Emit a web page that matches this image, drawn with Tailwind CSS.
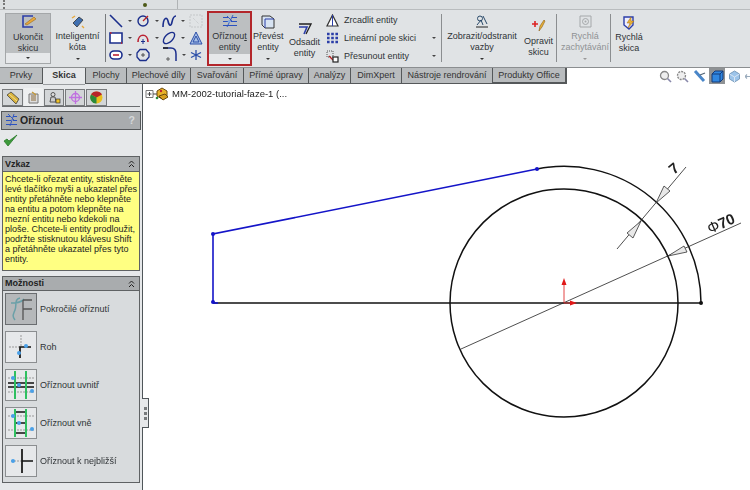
<!DOCTYPE html>
<html lang="cs">
<head>
  <meta charset="UTF-8" />
  <title>Oříznout entity</title>
  <script src="https://cdn.jsdelivr.net/npm/@tailwindcss/browser@4"></script>
</head>
<body class="w-[750px] h-[490px] overflow-hidden bg-white blur-[0.3px] text-[#2f3336] font-['Liberation_Sans',Arial,sans-serif] text-[9px] leading-[10.5px]">

  <!-- horni lista -->
  <div class="h-[10px] bg-[#dcdfe1] border-b border-[#b9bcbe] flex items-center pl-[3px] gap-[20px]">
    <div class="w-[2px] h-[9px] border-l-2 border-dotted border-[#777]"></div>
    <div class="w-[4px] h-[4px] ml-[118px] bg-[#4d5a18] rounded-full"></div>
    <div class="w-px h-[9px] ml-[10px] bg-[#b0b3b5]"></div>
  </div>

  <!-- ribbon -->
  <div class="h-[58px] bg-[#e0e3e5] border-b border-[#8b8e90] flex pl-[5px] pt-[3px]">
    <div class="w-[46px] h-[51px] flex flex-col bg-[#bcbfc1] border border-[#a4a7a9] text-center">
      <svg class="mx-auto mt-px" width="20" height="15" viewBox="0 0 20 15"><path d="M15 1H5v11h10" fill="none" stroke="#2b3ea8" stroke-width="1.6"/><path d="M7 9l9-7 2 2-9 6z" fill="#e8a83a" stroke="#8a5a10" stroke-width=".5"/></svg>
      <div class="mt-[2px] h-[21px]">Ukončit<br>skicu</div>
      <div class="mt-auto h-[10px] bg-[#e6e8ea] flex items-center justify-center"><i class="w-0 h-0 border-x-[2px] border-t-[2px] border-x-transparent border-t-[#333]"></i></div>
    </div>
    <div class="w-[47px] h-[51px] ml-[3px] flex flex-col text-center">
      <svg class="mx-auto mt-[2px]" width="16" height="14" viewBox="0 0 16 14"><path d="M3 8l6-6 4 3-6 7z" fill="#3f6fb0" stroke="#333" stroke-width=".8"/><path d="M2 3l3-2M12 11l2 2" stroke="#e8a83a" stroke-width="1.4"/></svg>
      <div class="mt-[2px] h-[21px] whitespace-nowrap">Inteligentní<br>kóta</div>
      <div class="mt-auto h-[10px] flex items-center justify-center"><i class="w-0 h-0 border-x-[2px] border-t-[2px] border-x-transparent border-t-[#333]"></i></div>
    </div>
    <div class="w-px h-[48px] ml-[4px] mt-px bg-[#777a7c]"></div>

    <!-- mrizka nastroju skici -->
    <div class="w-[100px] h-[51px] -mt-[1px] grid grid-cols-[26px_27px_27px_20px] auto-rows-[17px]">
      <div class="flex items-center pl-[3px] gap-[5px]"><svg width="14" height="14" viewBox="0 0 14 14"><path d="M1 1l12 12" stroke="#1a2e8c" stroke-width="1.6"/></svg><i class="w-0 h-0 border-x-[2px] border-t-[2px] border-x-transparent border-t-[#444]"></i></div>
      <div class="flex items-center pl-[4px] gap-[5px]"><svg width="14" height="14" viewBox="0 0 14 14"><circle cx="7" cy="7" r="5" fill="none" stroke="#1a2e8c" stroke-width="1.4"/><path d="M7 7l5-5" stroke="#b22" stroke-width="1.2"/></svg><i class="w-0 h-0 border-x-[2px] border-t-[2px] border-x-transparent border-t-[#444]"></i></div>
      <div class="flex items-center pl-[3px] gap-[4px]"><svg width="15" height="14" viewBox="0 0 15 14"><path d="M1 13C1 4 5 2 6 7s3 6 4 1 2-6 4-6" fill="none" stroke="#1a2e8c" stroke-width="1.6"/></svg><i class="w-0 h-0 border-x-[2px] border-t-[2px] border-x-transparent border-t-[#444]"></i></div>
      <div class="flex items-center pl-[3px]"><svg width="14" height="14" viewBox="0 0 14 14"><path d="M1 1h12v12H1z" fill="none" stroke="#c4c7c9" stroke-dasharray="2 1"/><path d="M4 4l6 6" stroke="#c4c7c9" stroke-dasharray="1 1"/></svg></div>

      <div class="flex items-center pl-[3px] gap-[5px]"><svg width="14" height="14" viewBox="0 0 14 14"><path d="M1 2h12v10H1z" fill="#fff" stroke="#1a2e8c" stroke-width="1.6"/><path d="M1 2h1.500M13 12h-1" stroke="#c22" stroke-width="1.600"/></svg><i class="w-0 h-0 border-x-[2px] border-t-[2px] border-x-transparent border-t-[#444]"></i></div>
      <div class="flex items-center pl-[4px] gap-[5px]"><svg width="14" height="14" viewBox="0 0 14 14"><path d="M2 11C2 2 12 2 12 11" fill="none" stroke="#b23" stroke-width="1.600"/><path d="M7 8v5M5 10.500h4" stroke="#1a2e8c"/></svg><i class="w-0 h-0 border-x-[2px] border-t-[2px] border-x-transparent border-t-[#444]"></i></div>
      <div class="flex items-center pl-[3px] gap-[5px]"><svg width="14" height="14" viewBox="0 0 14 14"><ellipse cx="7" cy="7" rx="7" ry="3.800" transform="rotate(-45 7 7)" fill="none" stroke="#1a2e8c" stroke-width="1.400"/></svg><i class="w-0 h-0 border-x-[2px] border-t-[2px] border-x-transparent border-t-[#444]"></i></div>
      <div class="flex items-center pl-[3px]"><svg width="14" height="14" viewBox="0 0 14 14"><path d="M7 1l6 12H1zM7 5l3 6H4z" fill="#a8c0e6" stroke="#2b4ea8"/></svg></div>

      <div class="flex items-center pl-[3px] gap-[5px]"><svg width="14" height="14" viewBox="0 0 14 14"><rect x="1" y="3" width="12" height="8" rx="4" fill="#fff" stroke="#1a2e8c" stroke-width="1.600"/><path d="M4 7h6" stroke="#b23" stroke-width="1.600"/></svg><i class="w-0 h-0 border-x-[2px] border-t-[2px] border-x-transparent border-t-[#444]"></i></div>
      <div class="flex items-center pl-[4px] gap-[5px]"><svg width="14" height="14" viewBox="0 0 14 14"><path d="M4 1.500h6L13 5v4l-3 3.500H4L1 9V5z" fill="none" stroke="#1a2e8c" stroke-width="1.300"/><path d="M7 5v4M5 7h4" stroke="#333" stroke-width=".8"/></svg></div>
      <div class="flex items-center pl-[3px] gap-[4px]"><svg width="16" height="15" viewBox="0 0 16 15"><path d="M1 1h8c4 0 5 3 5 6v7" fill="none" stroke="#1a2e8c" stroke-width="1.500"/><path d="M1 1h5" stroke="#222" stroke-width="1.500"/><path d="M6 10v4M4 12h4" stroke="#444" stroke-width=".8"/></svg><i class="w-0 h-0 border-x-[2px] border-t-[2px] border-x-transparent border-t-[#444]"></i></div>
      <div class="flex items-center pl-[4px]"><svg width="12" height="12" viewBox="0 0 12 12"><path d="M6 1v10M1 3.500l10 5M1 8.500l10-5" stroke="#2b4ea8" stroke-width="1.300"/></svg></div>
    </div>

    <!-- Oriznout entity -->
    <div class="w-[45px] h-[55px] -mt-[2px] ml-px flex flex-col border-2 border-[#b3262b] text-center bg-[#bcbfc1]">
      <svg class="mx-auto mt-[2px]" width="16" height="13" viewBox="0 0 16 13"><path d="M1 2.500h5M10 2.500h5M1 6.500h6M9 6.500h6M1 10.500h14" stroke="#2b52c0" stroke-width="1.200"/><path d="M5 1l6 6M11 0L5 12" stroke="#2b52c0" stroke-width=".9"/><circle cx="7" cy="6.500" r="1.200" fill="#7aa7e8"/></svg>
      <div class="mt-[3px] h-[21px] whitespace-nowrap">Oříznou<u>t</u><br>entity</div>
      <div class="mt-auto h-[10px] bg-[#e6e8ea] flex items-center justify-center"><i class="w-0 h-0 border-x-[2px] border-t-[2px] border-x-transparent border-t-[#333]"></i></div>
    </div>
    <div class="w-[30px] h-[51px] ml-[1px] flex flex-col text-center">
      <svg class="mx-auto mt-[2px]" width="14" height="14" viewBox="0 0 14 14"><path d="M1 1h8l4 3v9H4L1 10z" fill="#d7e3f2" stroke="#333"/><path d="M4 4h9M4 4v9" stroke="#2b3ea8"/></svg>
      <div class="mt-[2px] h-[21px]">Převést<br>entity</div>
      <div class="mt-auto h-[10px] flex items-center justify-center"><i class="w-0 h-0 border-x-[2px] border-t-[2px] border-x-transparent border-t-[#333]"></i></div>
    </div>
    <div class="w-[33px] h-[51px] ml-[5px] flex flex-col text-center">
      <svg class="mx-auto mt-[9px]" width="14" height="13" viewBox="0 0 14 13"><path d="M1 2h12l-5 10" fill="none" stroke="#222" stroke-width="1.300"/><path d="M1 5h8l-3 7" fill="none" stroke="#2b3ea8" stroke-width="1.600"/></svg>
      <div class="mt-[2px]">Odsadit<br>entity</div>
    </div>

    <!-- seznam -->
    <div class="w-[115px] ml-[5px] flex flex-col gap-[6px] pt-[1px] shrink-0">
      <div class="h-[12px] flex items-center gap-[5px]"><svg width="13" height="13" viewBox="0 0 13 13"><path d="M6.500 1L12 12H1z" fill="#fff" stroke="#333" stroke-width="1.200"/><path d="M6.500 1v11" stroke="#2b3ea8"/></svg>Zrcadlit entity</div>
      <div class="h-[12px] flex items-center gap-[5px]"><svg width="13" height="12" viewBox="0 0 13 12"><path d="M1 2h11M1 6h11M1 10h11" stroke="#2b3ea8" stroke-width="2.400" stroke-dasharray="2.600 1.600"/></svg>Lineární pole skici<i class="ml-auto mr-[5px] w-0 h-0 border-x-[2px] border-t-[2px] border-x-transparent border-t-[#444]"></i></div>
      <div class="h-[12px] flex items-center gap-[5px]"><svg width="13" height="13" viewBox="0 0 13 13"><path d="M1 1h6v6H1z" fill="none" stroke="#555" stroke-dasharray="1 1"/><path d="M3 6l4 4" stroke="#b22" stroke-width="1.300"/><rect x="7" y="7" width="5" height="5" fill="#fff" stroke="#222" stroke-width="1.200"/></svg>Přesunout entity<i class="ml-auto mr-[5px] w-0 h-0 border-x-[2px] border-t-[2px] border-x-transparent border-t-[#444]"></i></div>
    </div>
    <div class="w-px h-[48px] mt-px bg-[#8b8e90]"></div>

    <div class="w-[72px] h-[51px] ml-[4px] flex flex-col text-center">
      <svg class="mx-auto mt-[1px]" width="14" height="14" viewBox="0 0 14 14"><path d="M1 13h12" stroke="#222"/><path d="M5 2a2.500 2.500 0 100 5 2.500 2.500 0 000-5zM2 11l4-5 2 5M8 2l4 8" fill="none" stroke="#2a4a6a"/></svg>
      <div class="mt-[3px] h-[21px] whitespace-nowrap">Zobrazit/odstranit<br>vazby</div>
      <div class="mt-auto h-[10px] flex items-center justify-center"><i class="w-0 h-0 border-x-[2px] border-t-[2px] border-x-transparent border-t-[#333]"></i></div>
    </div>
    <div class="w-[33px] h-[51px] ml-[4px] flex flex-col text-center">
      <svg class="mx-auto mt-[6px]" width="15" height="14" viewBox="0 0 15 14"><path d="M1 5h6M4 2v6" stroke="#d22" stroke-width="1.600"/><path d="M8 12l1-5 4-6 1 1-3 6z" fill="#e8b23a" stroke="#8a5a10" stroke-width=".6"/></svg>
      <div class="mt-[3px]">Opravit<br>skicu</div>
    </div>
    <div class="w-px h-[48px] ml-[1px] mt-px bg-[#8b8e90]"></div>
    <div class="w-[48px] h-[51px] ml-[4px] flex flex-col text-center text-[#8f9294]">
      <svg class="mx-auto mt-[2px]" width="13" height="13" viewBox="0 0 13 13"><path d="M1 1h11v11H1z" fill="none" stroke="#a5a8aa"/><circle cx="6.500" cy="6.500" r="3" fill="none" stroke="#a5a8aa"/><circle cx="6.500" cy="6.500" r="1" fill="#a5a8aa"/></svg>
      <div class="mt-[3px] h-[21px] whitespace-nowrap">Rychlá<br>zachytávání</div>
      <div class="mt-auto h-[10px] flex items-center justify-center"><i class="w-0 h-0 border-x-[2px] border-t-[2px] border-x-transparent border-t-[#999]"></i></div>
    </div>
    <div class="w-px h-[48px] ml-[1px] mt-px bg-[#8b8e90]"></div>
    <div class="w-[30px] h-[51px] ml-[3px] flex flex-col text-center">
      <svg class="mx-auto mt-[3px]" width="14" height="14" viewBox="0 0 14 14"><path d="M2 1h9v8l-4 4-5-4z" fill="#eef" stroke="#2b3ea8" stroke-width="1.400"/><path d="M9 1L5 7h3l-2 5 6-7H9z" fill="#e8b23a" stroke="#a06a10" stroke-width=".5"/></svg>
      <div class="mt-[2px]">Rychlá<br>skica</div>
    </div>
  </div>

  <!-- zalozky -->
  <div class="h-[16px] flex items-stretch relative z-10 text-[#333]">
    <div class="w-[43px] bg-[#b9bcbe] border-r border-b border-[#55585a] text-center leading-[14px]">Prvky</div>
    <div class="w-[42px] h-[17px] bg-[#e6e8ea] border-b border-[#9a9da0] text-center font-bold leading-[14px]">Skica</div>
    <div class="w-[42px] bg-[#b9bcbe] border-x border-b border-[#55585a] text-center leading-[14px]">Plochy</div>
    <div class="w-[64px] bg-[#b9bcbe] border-r border-b border-[#55585a] text-center leading-[14px]">Plechové díly</div>
    <div class="w-[53px] bg-[#b9bcbe] border-r border-b border-[#55585a] text-center leading-[14px]">Svařování</div>
    <div class="w-[65px] bg-[#b9bcbe] border-r border-b border-[#55585a] text-center leading-[14px]">Přímé úpravy</div>
    <div class="w-[42px] bg-[#b9bcbe] border-r border-b border-[#55585a] text-center leading-[14px]">Analýzy</div>
    <div class="w-[51px] bg-[#b9bcbe] border-r border-b border-[#55585a] text-center leading-[14px]">DimXpert</div>
    <div class="w-[91px] bg-[#b9bcbe] border-r border-b border-[#55585a] text-center leading-[14px]">Nástroje rendrování</div>
    <div class="w-[74px] bg-[#b9bcbe] border-r-2 border-b-2 border-[#55585a] text-center leading-[14px]">Produkty Office</div>

    <!-- ikony pohledu -->
    <div class="ml-auto flex items-center gap-[4px] pr-0">
      <svg width="13" height="13" viewBox="0 0 13 13"><circle cx="5.500" cy="5.500" r="4" fill="#eee" stroke="#888" stroke-width="1.300"/><path d="M8.500 8.500l3.500 3.500" stroke="#88a" stroke-width="1.600"/></svg>
      <svg width="13" height="13" viewBox="0 0 13 13"><circle cx="5.500" cy="5.500" r="4" fill="#eee" stroke="#888" stroke-width="1.300" stroke-dasharray="2 1"/><path d="M8.500 8.500l3.500 3.500" stroke="#88a" stroke-width="1.600"/></svg>
      <svg width="13" height="13" viewBox="0 0 13 13"><path d="M2 1l9 10" stroke="#4a86c8" stroke-width="3"/><path d="M7 5l5-2" stroke="#567" stroke-width="1.200"/></svg>
      <div class="w-[16px] h-[16px] -mx-px bg-[#8f9294] flex items-center justify-center"><svg width="13" height="13" viewBox="0 0 13 13"><path d="M1 4l3-3h8v8l-3 3H1z" fill="#2f86e0" stroke="#123a7a"/><path d="M1 4h8v8M9 4l3-3" fill="none" stroke="#123a7a"/></svg></div>
      <svg width="13" height="13" viewBox="0 0 13 13"><path d="M6.500 1l5 3v5l-5 3-5-3V4z" fill="#9cc4ea" stroke="#7a9cbc"/><path d="M1.500 4l5 3 5-3M6.500 7v5" fill="none" stroke="#d7e6f5"/></svg>
      <svg width="5" height="13" viewBox="0 0 5 13"><path d="M0 6.500h5M2 4.500L0 6.500l2 2" fill="none" stroke="#9ab" stroke-width="1.200"/></svg>
    </div>
  </div>

  <div class="h-[406px] flex relative">
    <!-- levy panel -->
    <aside class="w-[143px] shrink-0 bg-[#e6e8ea] border-r border-[#50565a] flex flex-col px-[2px]">
      <div class="flex h-[23px] pt-[5px] gap-px pl-0 border-b border-[#6a6d70]">
        <div class="w-[21px] bg-[#d3d6d8] border border-[#777a7c] flex items-center justify-center"><svg width="14" height="14" viewBox="0 0 14 14"><path d="M1 4l4-3 8 7-3 5z" fill="#d8b23c" stroke="#444" stroke-width=".8"/><path d="M3 3l8 7" stroke="#f4e08a"/></svg></div>
        <div class="w-[19px] -mt-[1px] bg-[#eef0f1] flex items-center justify-center"><svg width="13" height="13" viewBox="0 0 13 13"><path d="M2 3h9v9H2z" fill="#ddd" stroke="#777"/><path d="M4 5h5M4 7h5M4 9h5" stroke="#8a6a3a"/><path d="M5 1l4 3" stroke="#c49a3a" stroke-width="1.500"/></svg></div>
        <div class="w-[20px] bg-[#d3d6d8] border border-[#777a7c] flex items-center justify-center"><svg width="13" height="13" viewBox="0 0 13 13"><circle cx="5" cy="3.500" r="2" fill="#ddd" stroke="#555"/><path d="M2 11l1-5h4l1 5z" fill="#ccc" stroke="#555"/><rect x="8" y="8" width="4" height="4" fill="#eec22a" stroke="#333" stroke-width=".7"/></svg></div>
        <div class="w-[20px] bg-[#d3d6d8] border border-[#777a7c] flex items-center justify-center"><svg width="13" height="13" viewBox="0 0 13 13"><circle cx="6.500" cy="6.500" r="4" fill="none" stroke="#c070e0" stroke-width="1.300"/><path d="M6.500 0v13M0 6.500h13" stroke="#c070e0" stroke-width="1.300"/></svg></div>
        <div class="w-[21px] bg-[#d3d6d8] border border-[#777a7c] flex items-center justify-center"><svg width="13" height="13" viewBox="0 0 13 13"><circle cx="6.500" cy="6.500" r="6" fill="#e8c020"/><path d="M6.500 6.500L1 3.500A6 6 0 016.500.5 6 6 0 0112 3.500z" fill="#b8242a"/><path d="M6.500 6.500V12.500A6 6 0 011 3.500z" fill="#2a8a3a"/></svg></div>
      </div>
      <div class="-mx-px mt-[4px] h-[19px] bg-[#a9acae] border border-[#55585a] flex items-center pl-[3px] font-bold text-[10.500px] text-[#222]">
        <svg class="mr-[2px]" width="13" height="13" viewBox="0 0 13 13"><path d="M1 2.500h4M8 2.500h4M1 6.500h5M8 6.500h4M1 10.500h11" stroke="#2b52c0" stroke-width="1.200"/><path d="M3 0l7 7M9 0L5 12" stroke="#2b52c0" stroke-width=".9"/></svg>Oříznout
        <span class="ml-auto mr-[5px] font-bold text-[#d6d8da]">?</span>
      </div>
      <svg class="ml-[1px] mt-[4px]" width="15" height="13" viewBox="0 0 15 13"><path d="M1 7l4 5 9-11-8 6-2-2z" fill="#3c9a3c" stroke="#2a7a2a" stroke-width=".8"/></svg>
      <div class="mt-[9px] h-[115px] border border-[#5f6264] flex flex-col">
        <div class="h-[15px] shrink-0 bg-[#a9acae] border-b border-[#5f6264] flex items-center justify-between px-[2px] font-bold text-[#222]">Vzkaz<svg class="mr-[2px]" width="7" height="8" viewBox="0 0 7 8"><path d="M1 3.500l2.500-2.500L6 3.500M1 7l2.500-2.500L6 7" fill="none" stroke="#222"/></svg></div>
        <p class="flex-1 bg-[#ffff82] pl-[2px] pt-[3px] text-[9px] leading-[9.950px] text-[#222] whitespace-nowrap">Chcete-li ořezat entity, stiskněte<br>levé tlačítko myši a ukazatel přes<br>entity přetáhněte nebo klepněte<br>na entitu a potom klepněte na<br>mezní entitu nebo kdekoli na<br>ploše. Chcete-li entity prodloužit,<br>podržte stisknutou klávesu Shift<br>a přetáhněte ukazatel přes tyto<br>entity.</p>
      </div>
      <div class="mt-[5px] h-[207px] border border-[#5f6264] bg-[#d8dbdd] flex flex-col">
        <div class="h-[14px] shrink-0 bg-[#a9acae] border-b border-[#5f6264] flex items-center justify-between px-[2px] font-bold text-[#222]">Možnosti<svg class="mr-[2px]" width="7" height="8" viewBox="0 0 7 8"><path d="M1 3.500l2.500-2.500L6 3.500M1 7l2.500-2.500L6 7" fill="none" stroke="#222"/></svg></div>
        <div class="flex flex-col gap-[6px] pl-[2px] pt-[2px]">
          <div class="flex items-center gap-[3px]">
            <div class="w-[32px] h-[32px] bg-[#b5b8ba] border border-[#6a6d70] flex items-center justify-center"><svg width="26" height="26" viewBox="0 0 26 26"><path d="M12 2C6 3 9 9 7 14s-3 6 0 10M3 7c5 0 10 0 13-4" fill="none" stroke="#6aa0a8" stroke-width="1.500"/><path d="M15 4v20M15 13h9M15 4h9" stroke="#555" stroke-width="1.300"/></svg></div>
            Pokročilé oříznutí
          </div>
          <div class="flex items-center gap-[3px]">
            <div class="w-[32px] h-[32px] bg-[#e6e8ea] border border-[#8b8e90] flex items-center justify-center"><svg width="26" height="26" viewBox="0 0 26 26"><path d="M13 1v12M1 13h12" stroke="#999" stroke-dasharray="2 1"/><path d="M12 24V13h11" fill="none" stroke="#111" stroke-width="1.700"/><circle cx="18" cy="12" r="2" fill="#4aa0e8"/><circle cx="11" cy="19" r="2" fill="#4aa0e8"/></svg></div>
            Roh
          </div>
          <div class="flex items-center gap-[3px]">
            <div class="w-[32px] h-[32px] bg-[#e6e8ea] border border-[#8b8e90] flex items-center justify-center"><svg width="30" height="30" viewBox="0 0 30 30"><path d="M2 8h26M2 22h26" stroke="#999" stroke-dasharray="2 1"/><path d="M2 13h26M2 17h26" stroke="#111" stroke-width="1.500"/><path d="M9 1v28M20 1v28" stroke="#2fc060" stroke-width="2"/><circle cx="7" cy="8" r="2" fill="#4aa0e8"/><circle cx="13" cy="15" r="2" fill="#4aa0e8"/><circle cx="26" cy="21" r="2" fill="#4aa0e8"/></svg></div>
            Oříznout uvnitř
          </div>
          <div class="flex items-center gap-[3px]">
            <div class="w-[32px] h-[32px] bg-[#e6e8ea] border border-[#8b8e90] flex items-center justify-center"><svg width="30" height="30" viewBox="0 0 30 30"><path d="M2 8h26M2 22h26" stroke="#999" stroke-dasharray="2 1"/><path d="M9 4h11M9 15h11M9 25h11" stroke="#111" stroke-width="1.500"/><path d="M9 1v28M20 1v28" stroke="#2fc060" stroke-width="2"/><circle cx="7" cy="8" r="2" fill="#4aa0e8"/><circle cx="13" cy="15" r="2" fill="#4aa0e8"/><circle cx="26" cy="21" r="2" fill="#4aa0e8"/></svg></div>
            Oříznout vně
          </div>
          <div class="flex items-center gap-[3px]">
            <div class="w-[32px] h-[32px] bg-[#e6e8ea] border border-[#8b8e90] flex items-center justify-center"><svg width="26" height="26" viewBox="0 0 26 26"><path d="M3 13h11" stroke="#999" stroke-dasharray="2 1"/><path d="M14 13h11M14 1v24" stroke="#111" stroke-width="1.700"/><circle cx="5" cy="13" r="2" fill="#4aa0e8"/></svg></div>
            Oříznout k nejbližší
          </div>
        </div>
      </div>
    </aside>

    <!-- uchyt panelu -->
    <div class="absolute left-[142px] top-[314px] w-[7px] h-[30px] bg-[#e6e8ea] border border-l-0 border-[#50565a] flex flex-col items-center justify-center gap-[2px]">
      <i class="w-[3px] h-[3px] bg-[#777a7c]"></i><i class="w-[3px] h-[3px] bg-[#777a7c]"></i><i class="w-[3px] h-[3px] bg-[#777a7c]"></i>
    </div>

    <!-- grafika: souradnice odpovidaji oknu, posun o panel a listy -->
    <div class="flex-1">
      <div class="flex items-center h-[18px] pl-[2px] mt-[1px] text-[#222] text-[9.500px]">
        <svg width="26" height="15" viewBox="0 0 26 15"><path d="M1 3.500h7v7H1z" fill="#fff" stroke="#777"/><path d="M2.500 7h4M4.500 5v4M8 7h4" stroke="#444"/><path d="M12 4l5-3 5 3v5l-5 3-5-3z" fill="#e8b32a" stroke="#6a4a10"/><path d="M14 9l4 4 5-3-3-3z" fill="#d8a020" stroke="#6a4a10"/><circle cx="12" cy="11" r="1.300" fill="#2a8a3a"/><circle cx="16" cy="4" r="1.200" fill="#b23"/></svg>
        <span class="ml-[1px]">MM-2002-tutorial-faze-1 (...</span>
      </div>
      <svg class="block" width="607" height="387" viewBox="143 103 607 387">
        <g fill="none" stroke="#111" stroke-width="1.500">
          <circle cx="564" cy="303" r="114"/>
          <path d="M537 169A137 137 0 0 1 701 303"/>
          <path d="M213 303H701"/>
        </g>
        <g fill="none" stroke="#1414c8" stroke-width="1.600">
          <path d="M537 169L213 234V303"/>
          <path d="M213 303H218"/>
        </g>
        <g fill="#1414c8">
          <circle cx="537" cy="169" r="2"/><circle cx="213" cy="234" r="2"/><circle cx="213" cy="302" r="2"/>
        </g>
        <circle cx="701" cy="303" r="2" fill="#111"/>
        <g stroke="#222" stroke-width=".8" fill="none">
          <path d="M617 249L686 167"/>
          <path d="M461 349L741 223"/>
        </g>
        <g stroke="#333" stroke-width=".8" fill="#e8e8e8">
          <path d="M656 203L664 186 670 191z"/>
          <path d="M641 221L633 238 627 233z"/>
          <path d="M668 256L684 246 687 252z"/>
        </g>
        <path d="M564 303V284" stroke="#e03030" stroke-width=".9"/>
        <path d="M564 278l-2.500 7h5z" fill="#e01818"/>
        <path d="M564 303H570" stroke="#e03030" stroke-width=".9"/>
        <path d="M577 303l-7-2.500v5z" fill="#e01818"/>
        <text transform="translate(674 175) rotate(-40)" font-family="Liberation Sans, sans-serif" font-size="15" font-weight="700" fill="#222">7</text>
        <text transform="translate(710 234) rotate(-24)" font-family="Liberation Sans, sans-serif" font-size="15" font-weight="700" fill="#222"><tspan font-weight="400">Φ</tspan>70</text>
      </svg>
    </div>
  </div>
</body>
</html>
